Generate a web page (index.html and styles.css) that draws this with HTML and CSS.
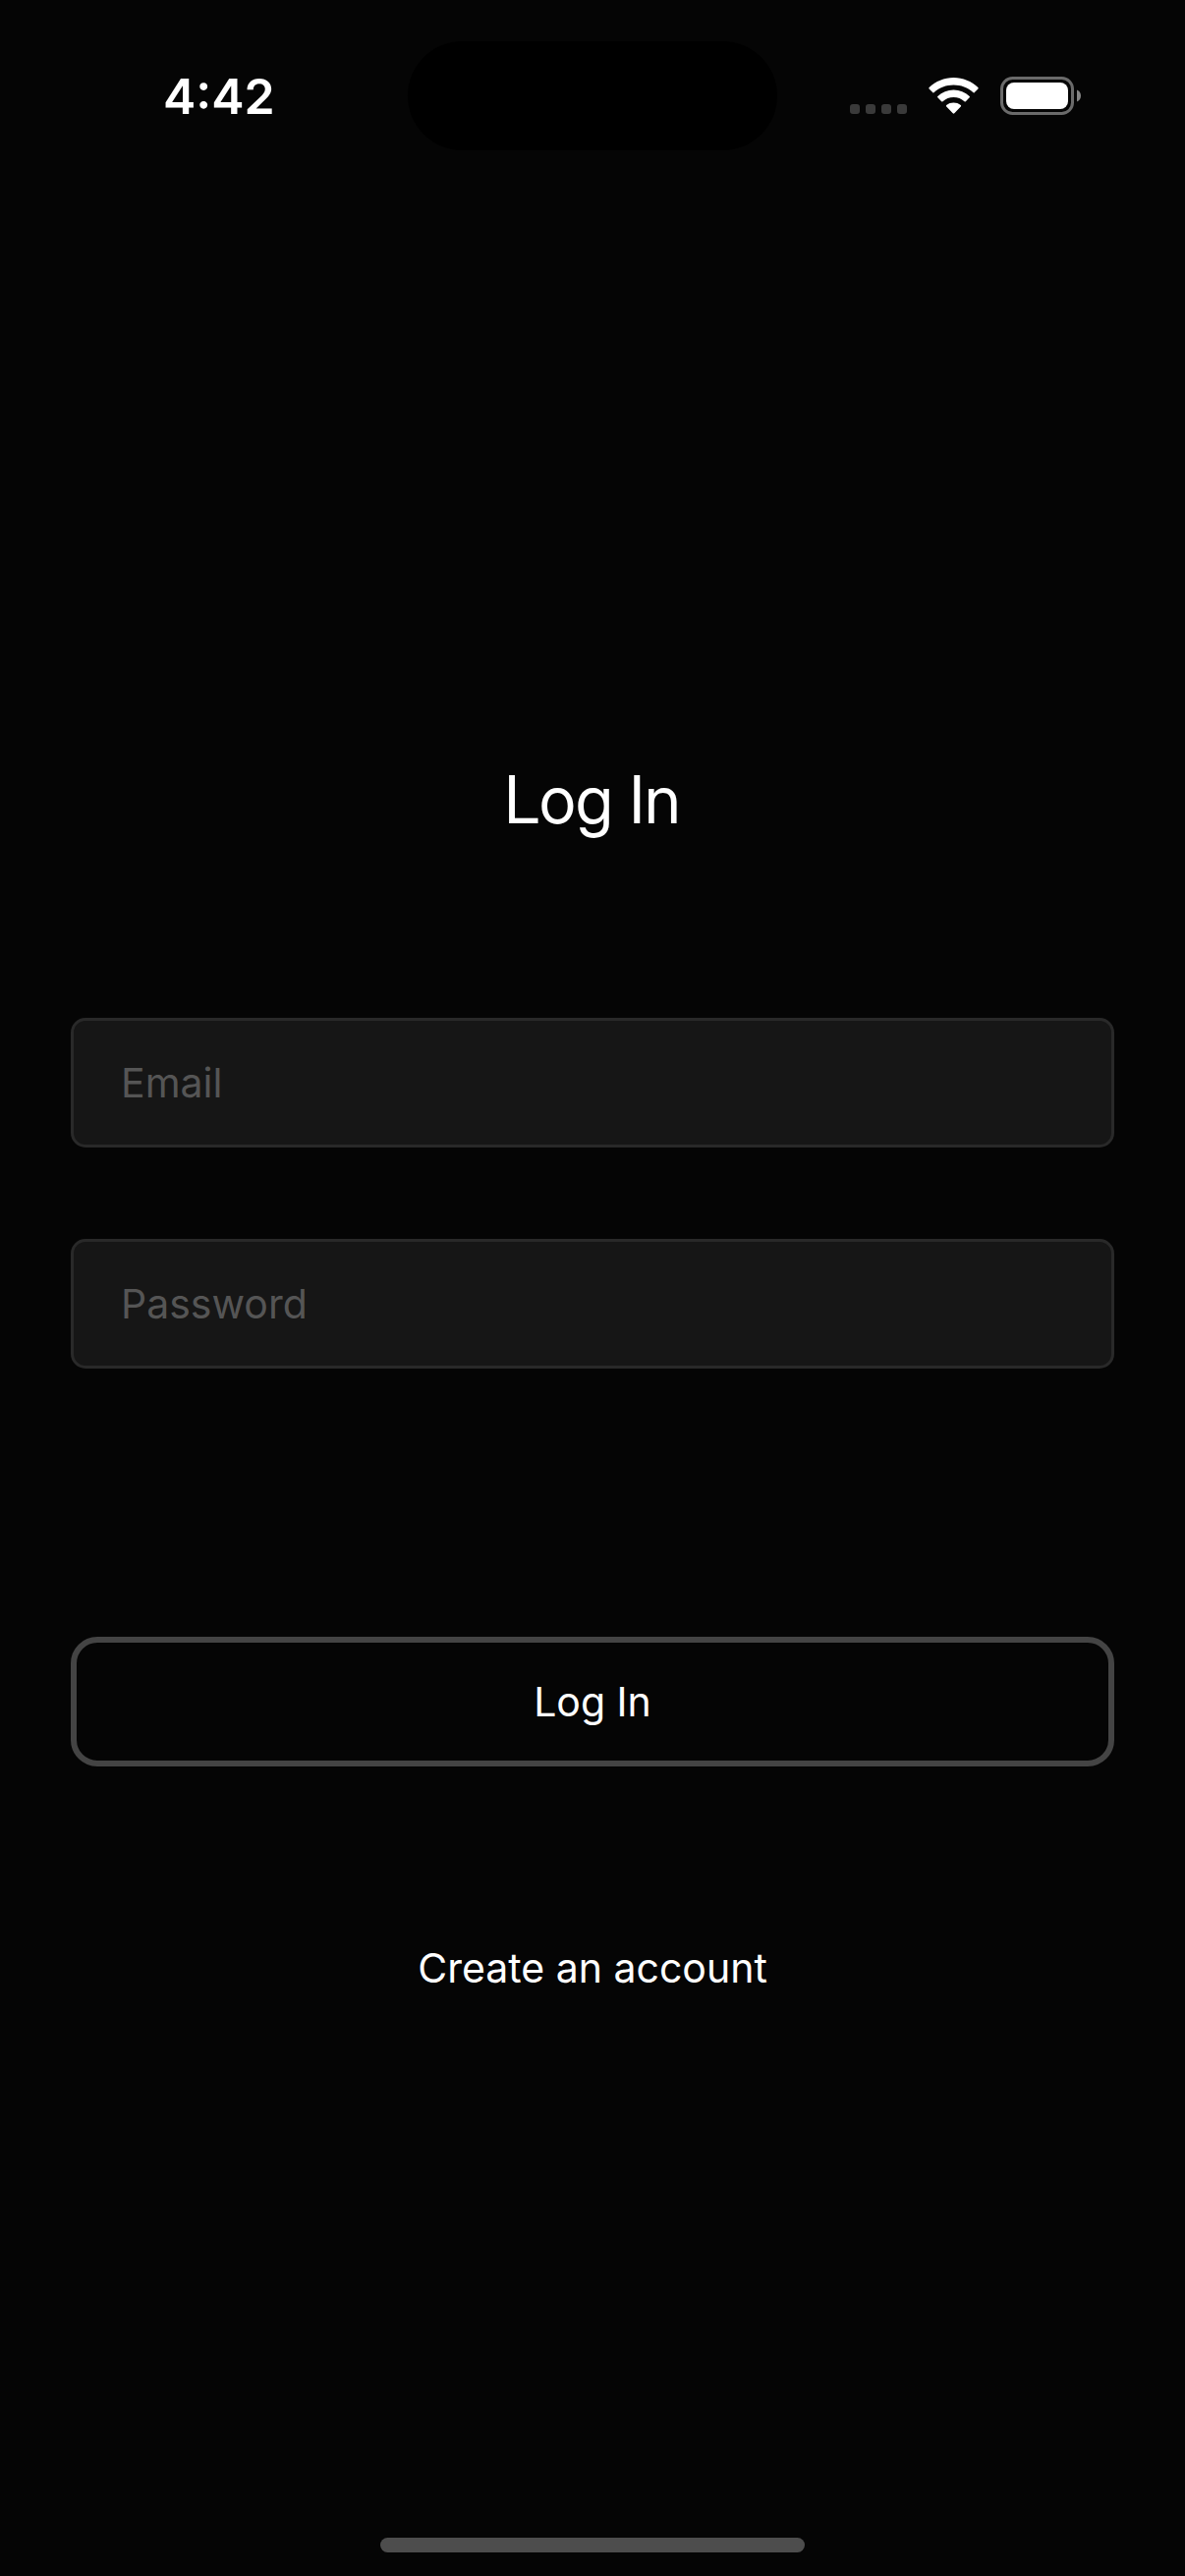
FILE: index.html
```html
<!DOCTYPE html>
<html lang="en">
<head>
  <meta charset="utf-8">
  <meta name="viewport" content="width=device-width, initial-scale=1">
  <title>Log In</title>
  <link rel="stylesheet" href="styles.css">
</head>
<body>
  <header class="status-bar">
    <time class="status-time">4:42</time>
    <div class="island"></div>
    <div class="status-icons">
      <svg width="58" height="39" viewBox="0 0 58 39" fill="#3a3a3a" aria-hidden="true">
        <rect x="0" y="28" width="10" height="10" rx="3"/>
        <rect x="16" y="28" width="10" height="10" rx="3"/>
        <rect x="32" y="28" width="10" height="10" rx="3"/>
        <rect x="48" y="28" width="10" height="10" rx="3"/>
      </svg>
      <svg width="51" height="39" viewBox="0 0 51 39" fill="#fff" aria-hidden="true">
        <path d="M.6 11.1Q0 11.8.6 12.5L4.400 16.200Q5 16.700 5.700 16.100C11 11.200 18 8.500 25.500 8.500S40 11.200 45.300 16.100Q46 16.700 46.600 16.200L50.400 12.500Q51 11.800 50.400 11.100C43.700 4.700 35 1 25.500 1S7.300 4.700.6 11.100Z"/>
        <path d="M9.300 20Q8.700 20.700 9.300 21.300L13.200 25.300Q13.800 25.900 14.500 25.300C17.500 22.600 21.300 21.100 25.500 21.100S33.500 22.600 36.500 25.300Q37.200 25.900 37.800 25.300L41.700 21.300Q42.300 20.700 41.700 20C37.300 15.900 31.700 13.600 25.500 13.600S13.700 15.900 9.300 20Z"/>
        <path d="M18.200 29Q17.500 29.700 18.200 30.400L24.700 37.300Q25.500 38.100 26.300 37.300L32.800 30.400Q33.500 29.700 32.800 29C30.700 27.100 28.200 26.400 25.500 26.400S20.300 27.100 18.200 29Z"/>
      </svg>
      <svg width="82" height="39" viewBox="0 0 82 39" aria-hidden="true">
        <rect x="1.500" y="1.500" width="72" height="36" rx="11" fill="none" stroke="#6b6b6b" stroke-width="3"/>
        <rect x="6" y="6" width="63" height="27" rx="8" fill="#fff"/>
        <path d="M78 13.500C80.500 14.500 82 16.800 82 19.500S80.500 24.500 78 25.500Z" fill="#858585"/>
      </svg>
    </div>
  </header>

  <main class="login">
    <h1 class="title">Log In</h1>
    <form class="form">
      <div class="fields">
        <input class="field" type="email" placeholder="Email" aria-label="Email">
        <input class="field" type="password" placeholder="Password" aria-label="Password">
      </div>
      <button class="submit" type="submit">Log In</button>
    </form>
    <a class="create" href="#">Create an account</a>
  </main>

  <footer class="home-area">
    <div class="home-bar"></div>
  </footer>
</body>
</html>
```

FILE: styles.css
```css
* {
  box-sizing: border-box;
}

body {
  margin: 0;
  min-height: 100vh;
  display: flex;
  flex-direction: column;
  background: #050505;
  color: #fff;
  font-family: Inter, "Liberation Sans", sans-serif;
  font-size: 41px;
  line-height: 50px;
}

.status-bar {
  display: grid;
  grid-template-columns: 1fr 376px 1fr;
  align-items: center;
  padding-top: 42px;
}

.status-time {
  padding-left: 166px;
  font-size: 50px;
  line-height: 60px;
  font-weight: 600;
}

.island {
  height: 111px;
  border-radius: 56px;
  background: #000;
}

.status-icons {
  display: flex;
  justify-content: flex-end;
  gap: 22px;
  padding-right: 106px;
}

.login {
  flex: 1;
  display: flex;
  flex-direction: column;
  align-items: center;
  padding: 621px 72px 0;
}

.title {
  margin: 0 0 182px;
  font-family: "Inter Display", Inter, "Liberation Sans", sans-serif;
  font-size: 67px;
  line-height: 80px;
  font-weight: 400;
}

.form {
  width: 100%;
  display: flex;
  flex-direction: column;
  gap: 273px;
}

.fields {
  display: flex;
  flex-direction: column;
  gap: 93px;
}

.field,
.submit {
  width: 100%;
  height: 132px;
  margin: 0;
  color: #fff;
  font: inherit;
}

.field {
  padding: 0 48px;
  border: 3px solid #292929;
  border-radius: 15px;
  background: #161616;
}

.field::placeholder {
  color: #555;
  opacity: 1;
}

.submit {
  padding: 0;
  border: 6px solid #444;
  border-radius: 27px;
  background: transparent;
}

.create {
  margin-top: 180px;
  color: #fff;
  text-decoration: none;
}

.home-area {
  display: flex;
  justify-content: center;
  padding-bottom: 24px;
}

.home-bar {
  width: 432px;
  height: 15px;
  border-radius: 8px;
  background: #4d4d4d;
}
```
